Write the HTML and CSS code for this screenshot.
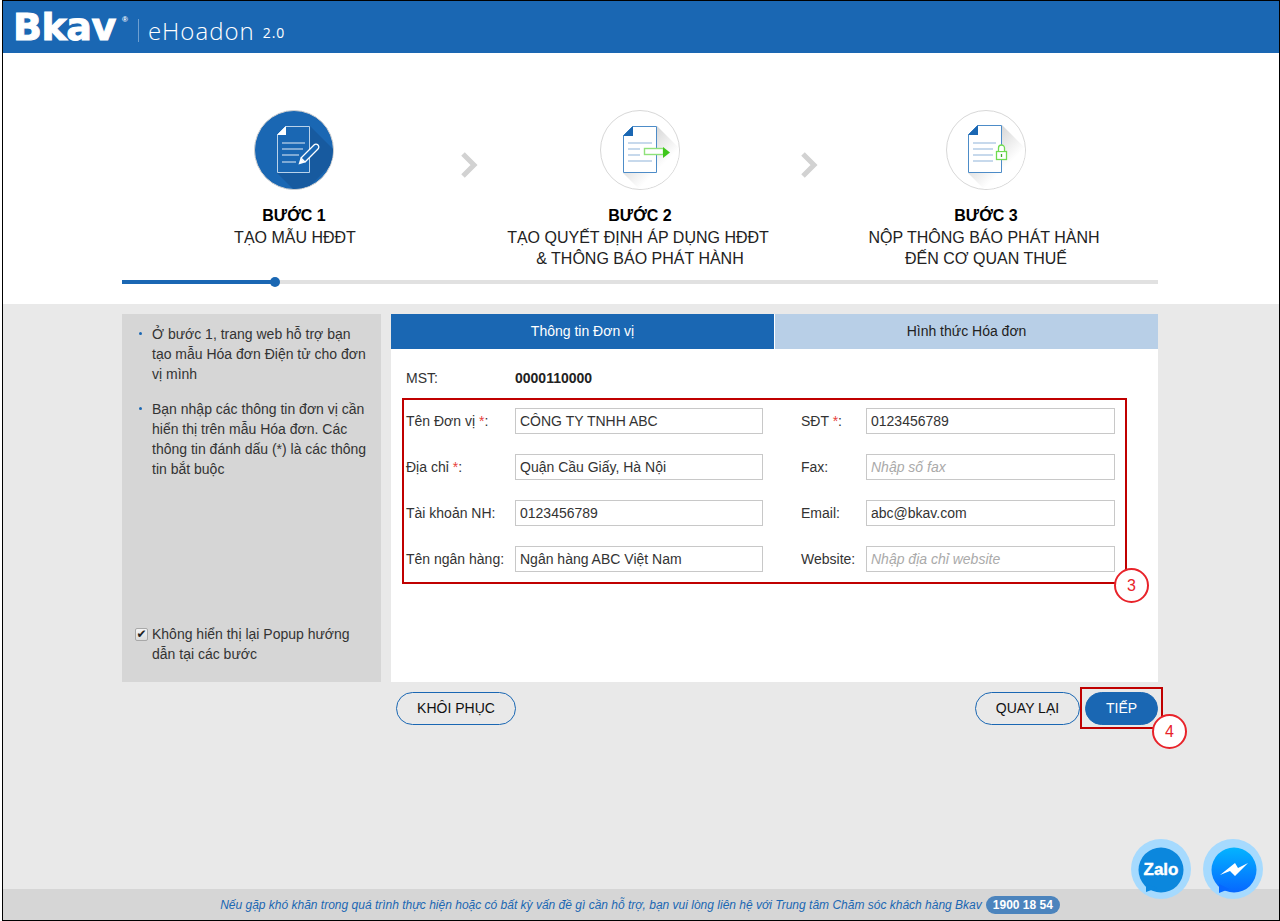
FILE: index.html
```html
<!DOCTYPE html>
<html lang="vi">
<head>
  <meta charset="UTF-8">
  <title>Bkav eHoadon</title>
  <link rel="stylesheet" href="styles.css">
</head>
<body>
  <div id="root">
    <div class="header">
      <span class="logo">Bkav</span>
      <span class="logo-r">®</span>
      <span class="logo-line"></span>
      <span class="app-name">eHoadon</span>
      <span class="app-ver">2.0</span>
    </div>

    <div class="steps">
      <div class="steps-row">
        <div class="step step1">
          <div class="step-icon active">
            <svg width="78" height="78" viewBox="0 0 78 78">
              <path d="M55 15L85 45 45 85 22 62H55z" fill="#175a9f"/>
              <path d="M22.500 23.500l8-8h24v46h-32z" fill="#1a67b3" stroke="#b9d2ea" stroke-width="1"/>
              <path d="M22 24l9-9v9z" fill="#fff"/>
              <path d="M27 32h23M27 38h21M27 44h17M27 51h14" stroke="#e4eef8" stroke-width="1.200"/>
              <path d="M46 47l13-13a2.500 2.500 0 0 1 4 4L50 51z" fill="#1a67b3" stroke="#fff" stroke-width="1.300"/>
              <path d="M43.500 53.500l2-6.500 4.500 4.500z" fill="#fff"/>
            </svg>
          </div>
          <b>BƯỚC 1</b>
          <span class="shift-r">TẠO MẪU HĐĐT</span>
        </div>
        <svg class="chev chev1" width="18" height="28" viewBox="0 0 18 28"><path d="M3 3l11 11L3 25" fill="none" stroke="#d2d2d2" stroke-width="5"/></svg>
        <div class="step step2">
          <div class="step-icon">
            <svg width="78" height="78" viewBox="0 0 78 78">
              <defs>
                <linearGradient id="shade" gradientUnits="userSpaceOnUse" x1="36" y1="36" x2="58" y2="58">
                  <stop offset="0" stop-color="#d8d8d8"/>
                  <stop offset="1" stop-color="#fff"/>
                </linearGradient>
              </defs>
              <path d="M56 15L78 37V78H38L22 62H56z" fill="url(#shade)"/>
              <path d="M22.500 24.500l9-9h24v46h-33z" fill="#fff" stroke="#4d8cc8" stroke-width="1"/>
              <path d="M22 25l10-10v10z" fill="#1a67b3"/>
              <path d="M27 32h24M27 38h12M27 44h12M27 50h24" stroke="#8fb3d9" stroke-width="1.200"/>
              <rect x="43.500" y="37.500" width="19" height="6" fill="#fff" stroke="#8fe27a" stroke-width="1.400"/>
              <path d="M62 36l7 5.500-7 5.500z" fill="#3fc71c"/>
            </svg>
          </div>
          <b>BƯỚC 2</b>
          <span class="shift-l">TẠO QUYẾT ĐỊNH ÁP DỤNG HĐĐT</span>
          <span>&amp; THÔNG BÁO PHÁT HÀNH</span>
        </div>
        <svg class="chev chev2" width="18" height="28" viewBox="0 0 18 28"><path d="M3 3l11 11L3 25" fill="none" stroke="#d2d2d2" stroke-width="5"/></svg>
        <div class="step step3">
          <div class="step-icon">
            <svg width="78" height="78" viewBox="0 0 78 78">
              <defs>
                <linearGradient id="shade3" gradientUnits="userSpaceOnUse" x1="35" y1="36" x2="57" y2="58">
                  <stop offset="0" stop-color="#d8d8d8"/>
                  <stop offset="1" stop-color="#fff"/>
                </linearGradient>
              </defs>
              <path d="M55 14L78 37V78H37L21 62H55z" fill="url(#shade3)"/>
              <path d="M21.500 23.500l9-9h24v47h-33z" fill="#fff" stroke="#4d8cc8" stroke-width="1"/>
              <path d="M21 24l10-10v10z" fill="#1a67b3"/>
              <path d="M26 32h23M26 38h20M26 44h20M26 50h20" stroke="#8fb3d9" stroke-width="1.200"/>
              <rect x="49.500" y="40.500" width="10" height="8" fill="#fff" stroke="#70dc50" stroke-width="1.300"/>
              <path d="M51.500 40v-3a3 3 0 0 1 6 0v3" fill="#fff" stroke="#70dc50" stroke-width="1.300"/>
              <path d="M54.500 43v3" stroke="#3fa52a" stroke-width="1.300"/>
            </svg>
          </div>
          <b>BƯỚC 3</b>
          <span class="shift-l">NỘP THÔNG BÁO PHÁT HÀNH</span>
          <span>ĐẾN CƠ QUAN THUẾ</span>
        </div>
      </div>
      <div class="progress"><div class="progress-done"></div></div>
    </div>

    <div class="main">
      <div class="content">
        <div class="side">
          <ul class="tips">
            <li>Ở bước 1, trang web hỗ trợ bạn tạo mẫu Hóa đơn Điện tử cho đơn vị mình</li>
            <li>Bạn nhập các thông tin đơn vị cần hiển thị trên mẫu Hóa đơn. Các thông tin đánh dấu (*) là các thông tin bắt buộc</li>
          </ul>
          <label class="no-popup"><input type="checkbox" checked><span>Không hiển thị lại Popup hướng dẫn tại các bước</span></label>
        </div>
        <div class="panel">
          <div class="tabs">
            <div class="tab on">Thông tin Đơn vị</div>
            <div class="tab">Hình thức Hóa đơn</div>
          </div>
          <div class="panel-body">
            <div class="mst"><span>MST:</span><b>0000110000</b></div>
            <div class="form-grid">
              <div class="field"><label>Tên Đơn vị <i>*</i>:</label><input value="CÔNG TY TNHH ABC"></div>
              <div class="field right"><label>SĐT <i>*</i>:</label><input value="0123456789"></div>
              <div class="field"><label>Địa chỉ <i>*</i>:</label><input value="Quận Cầu Giấy, Hà Nội"></div>
              <div class="field right"><label>Fax:</label><input placeholder="Nhập số fax"></div>
              <div class="field"><label>Tài khoản NH:</label><input value="0123456789"></div>
              <div class="field right"><label>Email:</label><input value="abc@bkav.com"></div>
              <div class="field"><label>Tên ngân hàng:</label><input value="Ngân hàng ABC Việt Nam"></div>
              <div class="field right"><label>Website:</label><input placeholder="Nhập địa chỉ website"></div>
              <div class="mark">3</div>
            </div>
          </div>
        </div>
      </div>
      <div class="buttons">
        <div class="btn">KHÔI PHỤC</div>
        <div class="btn-right">
          <div class="btn back">QUAY LẠI</div>
          <div class="next-wrap">
            <div class="btn next">TIẾP</div>
            <div class="mark">4</div>
          </div>
        </div>
      </div>
    </div>

    <div class="footer">
      <span>Nếu gặp khó khăn trong quá trình thực hiện hoặc có bất kỳ vấn đề gì cần hỗ trợ, bạn vui lòng liên hệ với Trung tâm Chăm sóc khách hàng Bkav</span>
      <b>1900 18 54</b>
    </div>

    <div class="chat zalo">
      <svg width="60" height="60" viewBox="0 0 60 60">
        <circle cx="30" cy="30" r="30" fill="#a6dafe"/>
        <circle cx="30" cy="31" r="22.500" fill="#0b87dd"/>
        <path d="M15 45v8l11-4z" fill="#0b87dd"/>
      </svg>
      <span>Zalo</span>
    </div>
    <div class="chat messenger">
      <svg width="60" height="60" viewBox="0 0 60 60">
        <defs>
          <linearGradient id="mess" x1="0" y1="0" x2="0" y2="1">
            <stop offset="0" stop-color="#03b4ff"/>
            <stop offset="1" stop-color="#0667ff"/>
          </linearGradient>
        </defs>
        <circle cx="30" cy="30" r="30" fill="#a6dafe"/>
        <circle cx="31" cy="31" r="22.500" fill="url(#mess)"/>
        <path d="M16 45v9l10-4z" fill="#0667ff"/>
        <path d="M17 36l15-12 3 5 10-5-13 13-5-5z" fill="#fff"/>
      </svg>
    </div>
  </div>
</body>
</html>
```

FILE: styles.css
```css
*{margin: 0; padding: 0; box-sizing: border-box;}

html, body{
  width: 1280px;
  height: 921px;
  overflow: hidden;
  background-color: #fff;
}

body{
  padding-left: 2px;
  font-family: "Liberation Sans", Arial, sans-serif;
  font-size: 14px;
  color: #333;
}

#root{
  position: relative;
  width: 1278px;
  height: 921px;
  border: 1px solid #000;
  display: flex;
  flex-direction: column;
}

/* header */
.header{
  height: 52px;
  background-color: #1a67b3;
  color: #fff;
  display: flex;
  align-items: flex-start;
  flex-shrink: 0;
}

.logo{
  width: 107px;
  margin-left: 10px;
  margin-top: 4px;
  font-family: "DejaVu Sans", sans-serif;
  font-weight: 700;
  font-size: 38px;
  line-height: 44px;
  letter-spacing: -0.500px;
  -webkit-text-stroke: 1px #fff;
}

.logo-r{
  font-size: 8px;
  font-weight: 700;
  margin: 14px 0 0 2px;
}

.logo-line{
  width: 1px;
  height: 23px;
  margin: 18px 0 0 10px;
  background-color: #6d9fd1;
}

.app-name{
  margin: 13px 0 0 9px;
  font-family: "Open Sans", sans-serif;
  font-weight: 300;
  font-size: 24px;
  line-height: 34px;
  letter-spacing: 1px;
}

.app-ver{
  margin: 23px 0 0 8px;
  font-family: "Open Sans", sans-serif;
  font-size: 14px;
  line-height: 18px;
  letter-spacing: 1px;
}

/* steps */
.steps{
  height: 251px;
  background-color: #fff;
  padding: 57px 119px 0;
  flex-shrink: 0;
}

.steps-row{
  position: relative;
  height: 170px;
}

.step{
  position: absolute;
  top: 0;
  display: flex;
  flex-direction: column;
  align-items: center;
  text-align: center;
  color: #222;
  font-size: 16px;
  line-height: 21px;
}

.step1{left: 52px; width: 240px;}
.step2{left: 368px; width: 300px;}
.step3{left: 714px; width: 300px;}

.step b{color: #000; margin-bottom: 1px;}
.shift-l{padding-right: 4px;}
.shift-r{padding-left: 2px;}

.step-icon{
  width: 80px;
  height: 80px;
  border: 1px solid #d8d8d8;
  border-radius: 50%;
  margin-bottom: 15px;
  overflow: hidden;
  background-color: #fff;
}

.step-icon.active{
  background-color: #1a67b3;
  border: 1px solid #cfcfcf;
}

.chev{position: absolute; top: 41px;}
.chev1{left: 338px;}
.chev2{left: 678px;}

.progress{
  height: 4px;
  background-color: #e1e1e1;
  position: relative;
  width: 1036px;
}

.progress-done{
  width: 153px;
  height: 4px;
  background-color: #1a67b3;
}

.progress-done::after{
  content: "";
  position: absolute;
  left: 148px;
  top: -3px;
  width: 10px;
  height: 10px;
  border-radius: 50%;
  background-color: #1a67b3;
}

/* main */
.main{
  flex: 1;
  background-color: #e9e9e9;
  padding: 10px 119px 0;
}

.content{
  display: flex;
  height: 368px;
  gap: 10px;
}

.side{
  width: 259px;
  background-color: #d6d6d6;
  padding: 10px 14px 18px 12px;
  display: flex;
  flex-direction: column;
  justify-content: space-between;
}

.tips{
  list-style: none;
  line-height: 20px;
}

.tips li{
  position: relative;
  padding-left: 18px;
  margin-bottom: 15px;
}

.tips li::before{
  content: "";
  position: absolute;
  left: 5px;
  top: 8px;
  width: 3px;
  height: 3px;
  border-radius: 50%;
  background-color: #1a67b3;
}

.no-popup{
  display: flex;
  line-height: 20px;
}

.no-popup input{
  appearance: none;
  width: 13px;
  height: 13px;
  margin: 4px 4px 0 1px;
  flex-shrink: 0;
  border: 1px solid #a8a8a8;
  border-radius: 2px;
  background: linear-gradient(#f4f4f4, #dcdcdc);
  text-align: center;
}

.no-popup input::before{
  content: "✔";
  display: block;
  font-family: "DejaVu Sans", sans-serif;
  font-size: 12px;
  line-height: 11px;
  color: #222;
}

.panel{
  width: 767px;
  background-color: #fff;
}

.tabs{
  display: flex;
  height: 35px;
}

.tab{
  flex: 1;
  background-color: #b8cfe7;
  color: #222;
  text-align: center;
  line-height: 34px;
}

.tab.on{
  background-color: #1a67b3;
  color: #fff;
  margin-right: 1px;
}

.panel-body{
  padding: 14px 32px 0 11px;
}

.mst{
  display: flex;
  line-height: 30px;
  padding-left: 4px;
  margin-bottom: 5px;
}

.mst span{width: 109px;}
.mst b{color: #222;}

.form-grid{
  position: relative;
  display: grid;
  grid-template-columns: 362px 1fr;
  grid-auto-rows: 42px;
  row-gap: 4px;
  width: 725px;
  height: 186px;
  border: 2px solid #c00000;
  padding: 0 9px 2px 2px;
}

.field{
  display: flex;
  align-items: center;
}

.field label{width: 109px; flex-shrink: 0;}
.field.right{padding-left: 33px;}
.field.right label{width: 65px;}
.field i{color: #e8413c; font-style: normal;}

.field input{
  height: 26px;
  border: 1px solid #c8c8c8;
  font-family: "Liberation Sans", Arial, sans-serif;
  font-size: 14px;
  color: #333;
  padding: 0 4px;
  width: 248px;
  outline: none;
}

.field.right input{width: 249px;}

.field input::placeholder{
  color: #aaa;
  font-style: italic;
}

.mark{
  position: absolute;
  width: 35px;
  height: 35px;
  border: 2px solid #e8232a;
  border-radius: 50%;
  background-color: #fff;
  color: #e8232a;
  font-size: 16px;
  line-height: 31px;
  text-align: center;
}

.form-grid .mark{right: -24px; bottom: -21px;}

.buttons{
  display: flex;
  justify-content: space-between;
  padding: 10px 0 0 274px;
  width: 1036px;
}

.btn{
  width: 120px;
  height: 33px;
  border: 1px solid #1a67b3;
  border-radius: 17px;
  color: #111;
  text-align: center;
  line-height: 31px;
}

.btn-right{display: flex;}
.btn.back{width: 105px; margin-right: 5px;}

.next-wrap{position: relative; width: 73px;}
.btn.next{
  width: 73px;
  background-color: #1a67b3;
  color: #fff;
}

.next-wrap::before{
  content: "";
  box-sizing: border-box;
  position: absolute;
  left: -5px;
  top: -5px;
  width: 83px;
  height: 42px;
  border: 2px solid #c00000;
}

.next-wrap .mark{left: 67px; top: 22px;}

/* footer */
.footer{
  height: 31px;
  background-color: #d6d6d6;
  flex-shrink: 0;
  display: flex;
  justify-content: center;
  align-items: center;
  gap: 4px;
  padding-right: 2px;
  font-size: 12px;
  font-style: italic;
  color: #1a67b3;
}

.footer b{
  background-color: #4c84bd;
  color: #fff;
  font-style: normal;
  border-radius: 9px;
  padding: 0 7px;
  line-height: 18px;
}

.chat{
  position: absolute;
  top: 838px;
  width: 60px;
  height: 60px;
}

.zalo{left: 1128px;}
.messenger{left: 1200px;}

.zalo span{
  position: absolute;
  left: 0;
  right: 0;
  top: 21px;
  text-align: center;
  color: #fff;
  font-weight: 700;
  font-size: 17px;
  line-height: 20px;
  -webkit-text-stroke: 0.400px #fff;
}
```
